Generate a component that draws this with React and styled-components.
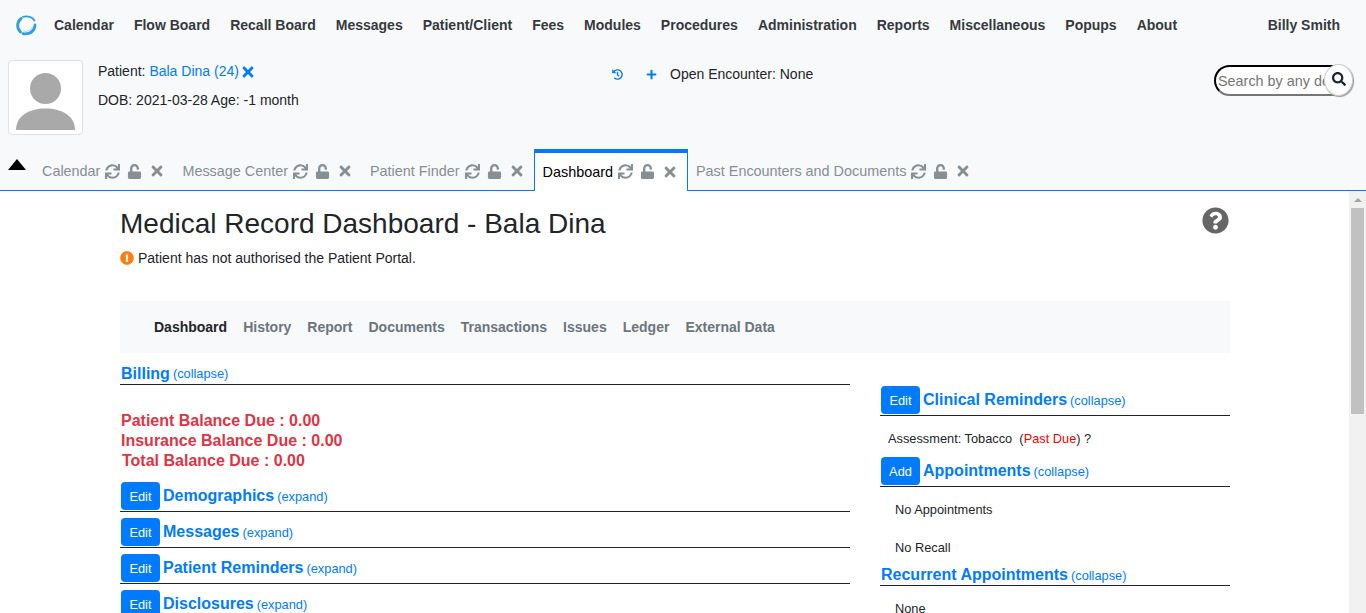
import React from "react";
import styled, { createGlobalStyle } from "styled-components";
import { FaSync, FaUnlock, FaTimes, FaHistory, FaPlus, FaSearch, FaQuestionCircle, FaExclamationCircle } from "react-icons/fa";

const Global = createGlobalStyle`
  html, body { margin: 0; padding: 0; height: 100%; overflow: hidden; }
  body { font-family: "Liberation Sans", Arial, sans-serif; font-size: 14px; color: #212529; background: #f8f9fa; }
  * { box-sizing: border-box; }
`;

const Page = styled.div`display: flex; flex-direction: column; height: 613px; overflow: hidden;`;
const Nav = styled.nav`display: flex; align-items: center; height: 50px; padding: 0 26px 0 15px; flex: none;`;
const Logo = styled.svg`width: 22px; height: 24px; margin-right: 8px; flex: none;`;
const Menu = styled.div`display: flex; flex: 1; gap: 20px; padding-left: 9px;`;
const MenuItem = styled.span`font-weight: 700; font-size: 14px; color: #343a40; white-space: nowrap;`;

const Head = styled.header`display: flex; height: 99px; padding: 10px 13px 0 8px; flex: none;`;
const Avatar = styled.div`width: 75px; height: 75px; background: #fff; border: 1px solid #dee2e6; border-radius: 4px; display: flex; align-items: flex-end; justify-content: center; padding: 0 7px 4px; flex: none;`;
const PatientInfo = styled.div`width: 529px; padding: 1px 0 0 15px; line-height: 21px; color: #212529;`;
const InfoLine = styled.div`display: flex; align-items: center; height: 21px; margin-bottom: 8px; white-space: pre;`;
const BlueLink = styled.span`color: #007bff; display: inline-flex; align-items: center;`;
const ClearIcon = styled(FaTimes)`font-size: 16px; margin-left: 1px;`;
const Encounter = styled.div`display: flex; align-items: center; height: 28px; flex: 1;`;
const EncIcon = styled.span`display: inline-flex; color: #007bff; font-size: 11px; margin-right: ${p => p.$gap}px;`;
const SearchWrap = styled.div`position: relative; width: 139px; height: 31px; margin-top: 5px; flex: none;`;
const SearchField = styled.input`width: 100%; height: 31px; border-radius: 16px; border-width: 2px; border-style: inset; border-color: #212121 #767676 #767676 #212121; background: #fff; font: 14.4px "Liberation Sans", Arial, sans-serif; padding: 1px 18px 1px 2px; outline: none; &::placeholder { color: #757575; }`;
const SearchBtn = styled.span`position: absolute; right: 0; top: -1px; width: 29px; height: 32px; border-radius: 50%; background: #fff; border: 1px solid #ccc; box-shadow: 1px 1px 1px #999; display: flex; align-items: center; justify-content: center; font-size: 14px; color: #1a2433; padding-bottom: 3px;`;

const TabBar = styled.div`display: flex; align-items: flex-start; height: 42px; border-bottom: 1px solid #007bff; padding-left: 8px; flex: none;`;
const Toggle = styled.span`width: 0; height: 0; border-left: 9px solid transparent; border-right: 9px solid transparent; border-bottom: 11px solid #000; margin: 10px 8px 0 0; flex: none;`;
const Tab = styled.div`
  display: flex; align-items: center; font-size: 14.4px; height: 41px; padding: 3px 9px 0 8px;
  color: #868e96;
  white-space: nowrap;
`;
const ActiveTab = styled(Tab)`
  color: #000; background: #fff; height: 42px; padding: 0 9px 1px 8px;
  border: 1px solid #007bff; border-top-width: 4px; border-bottom: none;
`;
const TabIcons = styled.span`display: inline-flex; align-items: center; color: #868e96; margin-left: 5px; gap: 7px; font-size: 15px;`;
const SmallX = styled(FaTimes)`font-size: 16px;`;

const Body = styled.div`display: flex; flex: 1; background: #fff; min-height: 0;`;
const Pane = styled.main`flex: 1; overflow: hidden; padding: 0 119px 0 120px;`;
const ScrollTrack = styled.div`width: 17px; background: #f1f1f1; flex: none; display: flex; flex-direction: column; align-items: stretch;`;
const ScrollArrow = styled.span`height: 17px; display: flex; align-items: center; justify-content: center; &::before { content: ""; border-left: 4px solid transparent; border-right: 4px solid transparent; border-bottom: 4px solid #a3a3a3; }`;
const ScrollThumb = styled.span`height: 206px; margin: 0 2px; background: #c1c1c1;`;

const TitleRow = styled.div`display: flex; justify-content: space-between; align-items: flex-start; padding-top: 16px;`;
const Title = styled.h1`font-size: 28px; font-weight: 400; margin: 0; line-height: 34px; color: #212529;`;
const Help = styled(FaQuestionCircle)`font-size: 27px; color: #666; margin: 0 1px 0 0; flex: none;`;
const Notice = styled.div`display: flex; align-items: center; gap: 4px; height: 20px; margin-top: 7px; color: #212529;`;
const Warn = styled(FaExclamationCircle)`font-size: 14px; color: #fd7e14;`;

const SubNav = styled.div`display: flex; align-items: center; height: 52px; background: #f8f9fa; margin-top: 33px; padding-left: 34px; gap: 16px;`;
const SubItem = styled.span`font-weight: 700; font-size: 14px; color: ${p => (p.$active ? "#212529" : "#6c757d")};`;

const Columns = styled.div`display: flex; justify-content: space-between;`;
const LeftCol = styled.div`width: 730px;`;
const RightCol = styled.div`width: 350px; padding-top: 27px;`;
const Section = styled.div`display: flex; align-items: center; height: ${p => p.$h || 36}px; border-bottom: 1px solid #212529; padding: ${p => p.$pt || 6}px 0 1px 1px; flex: none;`;
const EditBtn = styled.button`width: 39px; height: 28px; background: #007bff; color: #fff; border: none; border-radius: 4px; font: 12.8px "Liberation Sans", Arial, sans-serif; margin-right: 3px; padding: 0; flex: none;`;
const Heading = styled.span`font-weight: 700; font-size: 16px; color: #007bff; white-space: pre;`;
const Toggler = styled.span`font-size: 12.8px; color: #007bff; margin-left: 3px;`;
const Balances = styled.div`padding: 26px 0 5px 1px;`;
const Balance = styled.div`font-weight: 700; font-size: 16px; color: #dc3545; line-height: 20px; padding-left: ${p => p.$indent || 0}px;`;
const BodyText = styled.div`font-size: 12.8px; color: #212529; line-height: 15px; padding-left: ${p => p.$indent}px; margin: ${p => p.$m || "0"}; white-space: pre;`;
const PastDue = styled.span`color: #f00;`;

const tabs = [["Calendar"], ["Message Center"], ["Patient Finder"], ["Dashboard", true], ["Past Encounters and Documents"]];
const menu = ["Calendar", "Flow Board", "Recall Board", "Messages", "Patient/Client", "Fees", "Modules", "Procedures", "Administration", "Reports", "Miscellaneous", "Popups", "About"];
const sub = ["Dashboard", "History", "Report", "Documents", "Transactions", "Issues", "Ledger", "External Data"];

const Row = ({ btn, title, tog }) => (
  <Section>
    <EditBtn>{btn}</EditBtn>
    <Heading>{title}</Heading>
    <Toggler>({tog})</Toggler>
  </Section>
);

export default function App() {
  return (
    <Page>
      <Global />
      <Nav>
        <Logo viewBox="0 0 22 24" fill="none">
          <path d="M6.2 5.5C2 8.5 1.2 15 5.5 19" stroke="#2f9fd8" strokeWidth="2.8" strokeLinecap="round" />
          <path d="M8 3.8C12.5 2.4 17.5 4 19.5 7.5" stroke="#2f9fd8" strokeWidth="1.8" strokeLinecap="round" />
          <path d="M20 12C19.8 18 15 21.8 8 20.6" stroke="#2f9fd8" strokeWidth="2.8" strokeLinecap="round" />
          <path d="M9 18C12.5 18.8 16 17 17.5 14.5" stroke="#a8d8ef" strokeWidth="1.2" strokeLinecap="round" />
        </Logo>
        <Menu>{menu.map(m => <MenuItem key={m}>{m}</MenuItem>)}</Menu>
        <MenuItem>Billy Smith</MenuItem>
      </Nav>
      <Head>
        <Avatar>
          <svg width="59" height="57" viewBox="0 0 59 57">
            <circle cx="29.5" cy="15.5" r="15.5" fill="#a9a9a9" />
            <path d="M0 57C0 43 13 35.5 29.5 35.5S59 43 59 57Z" fill="#a9a9a9" />
          </svg>
        </Avatar>
        <PatientInfo>
          <InfoLine>Patient: <BlueLink>Bala Dina (24)<ClearIcon /></BlueLink></InfoLine>
          <InfoLine>DOB: 2021-03-28 Age: -1 month</InfoLine>
        </PatientInfo>
        <Encounter>
          <EncIcon $gap={23}><FaHistory /></EncIcon>
          <EncIcon $gap={13}><FaPlus /></EncIcon>
          Open Encounter: None
        </Encounter>
        <SearchWrap>
          <SearchField placeholder="Search by any demographics" />
          <SearchBtn><FaSearch /></SearchBtn>
        </SearchWrap>
      </Head>
      <TabBar>
        <Toggle />
        {tabs.map(([t, a]) => {
          const Item = a ? ActiveTab : Tab;
          return (
            <Item key={t}>
              {t}
              <TabIcons><FaSync /><FaUnlock /><SmallX /></TabIcons>
            </Item>
          );
        })}
      </TabBar>
      <Body>
        <Pane>
          <TitleRow>
            <Title>Medical Record Dashboard - Bala Dina</Title>
            <Help />
          </TitleRow>
          <Notice><Warn />Patient has not authorised the Patient Portal.</Notice>
          <SubNav>{sub.map((s, i) => <SubItem key={s} $active={i === 0}>{s}</SubItem>)}</SubNav>
          <Columns>
            <LeftCol>
              <Section $h={32} $pt={11}><Heading>Billing</Heading><Toggler>(collapse)</Toggler></Section>
              <Balances>
                <Balance>Patient Balance Due : 0.00</Balance>
                <Balance>Insurance Balance Due : 0.00</Balance>
                <Balance $indent={1}>Total Balance Due : 0.00</Balance>
              </Balances>
              <Row btn="Edit" title="Demographics" tog="expand" />
              <Row btn="Edit" title="Messages" tog="expand" />
              <Row btn="Edit" title="Patient Reminders" tog="expand" />
              <Row btn="Edit" title="Disclosures" tog="expand" />
            </LeftCol>
            <RightCol>
              <Row btn="Edit" title="Clinical Reminders" tog="collapse" />
              <BodyText $indent={8} $m="15px 0 5px">Assessment: Tobacco  (<PastDue>Past Due</PastDue>) ?</BodyText>
              <Row btn="Add" title="Appointments" tog="collapse" />
              <BodyText $indent={15} $m="15px 0 23px">No Appointments</BodyText>
              <BodyText $indent={15}>No Recall</BodyText>
              <Section $h={31} $pt={11}><Heading>Recurrent Appointments</Heading><Toggler>(collapse)</Toggler></Section>
              <BodyText $indent={15} $m="15px 0 0">None</BodyText>
            </RightCol>
          </Columns>
        </Pane>
        <ScrollTrack><ScrollArrow /><ScrollThumb /></ScrollTrack>
      </Body>
    </Page>
  );
}
